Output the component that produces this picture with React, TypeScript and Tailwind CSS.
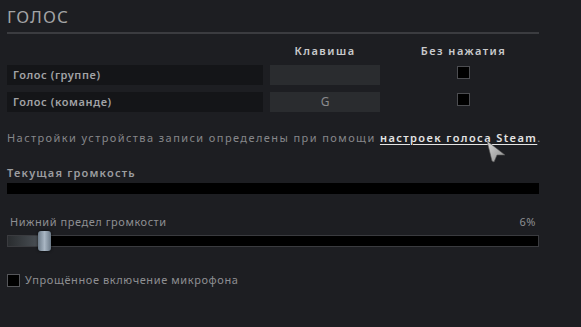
export default function App() {
  return (
    <div
      className="h-[327px] w-[581px] overflow-hidden bg-[#1d1e22] px-[7px] pt-[7px]"
      style={{ fontFamily: '"Noto Sans", "Open Sans", sans-serif' }}
    >
      <div className="w-[532px]">
        <h1 className="text-[17px] leading-[20px] tracking-[1px] text-[#a3a4a6]">ГОЛОС</h1>
        <div className="mt-[5px] h-[2px] bg-[#3b3c40]" />

        <div className="mt-[10px] flex h-[14px] items-center text-[11px] font-semibold tracking-[1.5px] text-[#c9cacc]">
          <div className="w-[263px]" />
          <div className="w-[110px] text-center">Клавиша</div>
          <div className="flex-1 pl-[8px] text-center">Без нажатия</div>
        </div>

        <div className="mt-[7px] flex flex-col gap-[7px]">
          <BindRow label="Голос (группе)" keyName="" />
          <BindRow label="Голос (команде)" keyName="G" />
        </div>

        <p className="mt-[19px] whitespace-nowrap text-[11px] leading-[14px] tracking-[1.42px] text-[#86878a]">
          Настройки устройства записи определены при помощи{" "}
          <span className="font-semibold text-[#e4e4e4] underline underline-offset-2">настроек голоса Steam</span>.
        </p>

        <div className="mt-[21px] text-[11px] font-semibold leading-[14px] tracking-[1.2px] text-[#9c9da0]">
          Текущая громкость
        </div>
        <div className="mt-[3px] h-[11px] bg-black" />

        <div className="mt-[21px] flex items-center justify-between px-[3px] text-[11px] leading-[14px] tracking-[0.55px] text-[#8e8f92]">
          <span>Нижний предел громкости</span>
          <span>6%</span>
        </div>
        <div className="relative mt-[6px] h-[12px] border border-[#3a3b3f] bg-black">
          <div className="h-full w-[36px] bg-gradient-to-r from-[#2a2d30] to-[#50565c]" />
          <div className="absolute left-[30px] top-[-5px] h-[20px] w-[13px] rounded-[3px] bg-gradient-to-r from-[#6c7a88] via-[#a9b6c3] to-[#6c7a88] shadow-[0_0_3px_rgba(0,0,0,0.8)]" />
        </div>

        <label className="mt-[26px] flex items-center gap-[5px] text-[11px] leading-[14px] tracking-[0.6px] text-[#8e8f92]">
          <span className="h-[13px] w-[13px] border border-[#55565a] bg-black" />
          Упрощённое включение микрофона
        </label>
      </div>

      <svg className="absolute left-[485px] top-[140px]" width="22" height="24" viewBox="0 0 22 24">
        <defs>
          <linearGradient id="cur" x1="0" y1="0" x2="1" y2="1">
            <stop offset="0" stopColor="#d8d8d8" />
            <stop offset="1" stopColor="#8a8a8a" />
          </linearGradient>
        </defs>
        <path d="M2 1 L20 15 L12 15 L9 22 L7 21 Z" fill="url(#cur)" stroke="#555" strokeWidth="0.6" />
      </svg>
    </div>
  );
}

function BindRow({ label, keyName }: { label: string; keyName: string }) {
  return (
    <div className="flex h-[20px] items-stretch">
      <div className="flex w-[256px] items-center bg-[#141518] pl-[6px] text-[11px] font-semibold tracking-[0.6px] text-[#a2a3a6]">
        {label}
      </div>
      <div className="ml-[7px] flex w-[110px] items-center justify-center bg-[#2a2c2f] text-[12px] text-[#8a8b8e]">
        {keyName}
      </div>
      <div className="flex flex-1 items-start justify-center pl-[8px] pt-[1px]">
        <span className="h-[13px] w-[13px] border border-[#4c4d51] bg-black" />
      </div>
    </div>
  );
}
